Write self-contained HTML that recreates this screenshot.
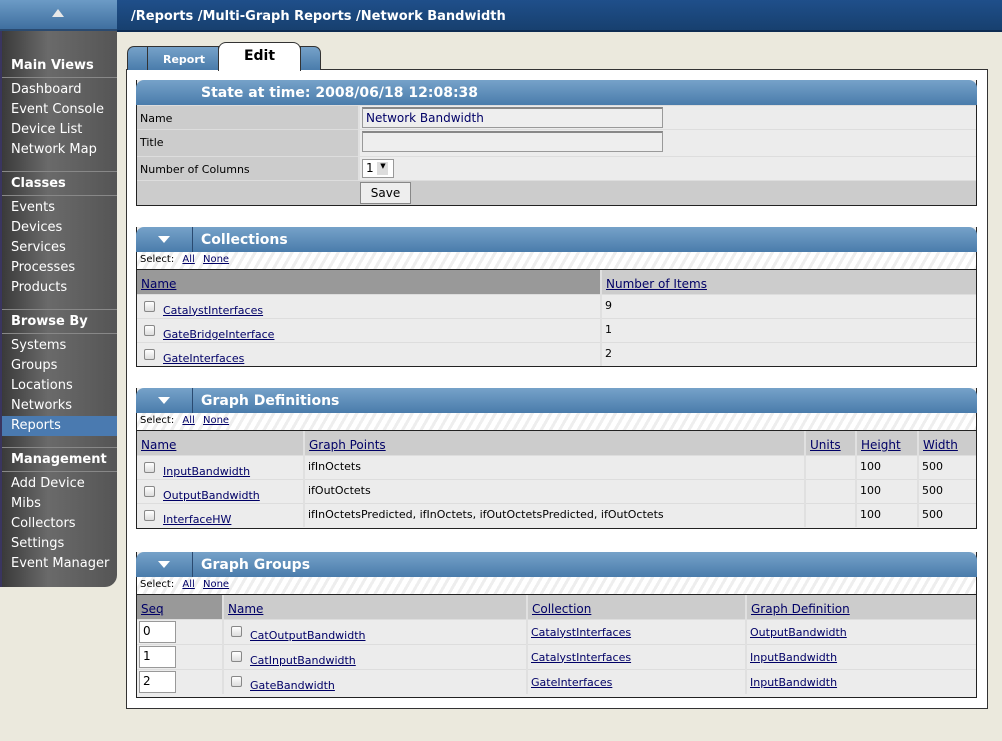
<!DOCTYPE html>
<html><head><meta charset="utf-8"><style>
*{box-sizing:border-box;margin:0;padding:0}
body{width:1002px;height:741px;background:#ebe9dd;font-family:"DejaVu Sans","Liberation Sans",sans-serif;font-size:11px;color:#000;position:relative;overflow:hidden}
.abs{position:absolute}
#top{left:117px;top:0;width:885px;height:32px;background:linear-gradient(#1f4f8a,#17406f);border-bottom:2px solid #0e2c52;color:#fff;font-weight:bold;font-size:13px;padding:9px 0 0 14px}
#tbtn{left:0;top:0;width:117px;height:31px;background:linear-gradient(#6c9bc6,#3f6f9f);border-bottom:2px solid #2a4a70}
#side{left:0;top:31px;width:117px;height:556px;background:linear-gradient(90deg,#3a3a3a,#6a6a6a 40%,#555 100%);border-left:2px solid #3a3560;border-bottom-right-radius:12px}
#side .h{color:#fff;font-weight:bold;font-size:13px;padding-left:9px;height:24px;line-height:24px;border-bottom:1px solid #888}
#side .i{color:#fff;font-size:13px;padding-left:9px;height:20px;line-height:20px}
#side .sep{border-top:1px solid #888;margin-top:11px}
#box{left:126px;top:69px;width:862px;height:640px;background:#fff;border:1px solid #333}
.sec{position:absolute;left:136px;width:841px;border:1px solid #222;border-top:none;background:#ececec}
.hd{height:25px;background:linear-gradient(#76a2c9,#4a7cab);border-radius:8px 8px 0 0;color:#fff;font-weight:bold;font-size:14px;position:relative;margin:0 -1px}
.hd .t{position:absolute;left:65px;top:5px}
.hd .tri{position:absolute;left:0;top:0;width:57px;height:25px;border-right:1px solid #2a4a70;border-radius:8px 0 0 0}
.hd .tri:after{content:"";position:absolute;left:22px;top:9px;border-left:6px solid transparent;border-right:6px solid transparent;border-top:7px solid #fff}
.sel{height:18px;background:repeating-linear-gradient(120deg,#fff 0 5px,#eee 5px 8px);border-bottom:1px solid #222;padding:2px 3px;font-size:10px}
a{color:#000066;text-decoration:underline}
.sel a{margin-left:5px}
table{border-collapse:collapse;width:100%}
th{background:#ccc;text-align:left;font-weight:normal;font-size:12px;height:24px;padding:4px 4px 0;border-left:2px solid #e0e0e0}
td{height:24px;border-top:1px solid #ddd;border-left:2px solid #e0e0e0;padding:0 3px;font-size:11px;vertical-align:top;padding-top:4px}
.cb{display:inline-block;width:11px;height:11px;border:1px solid #888;border-radius:2px;background:linear-gradient(#fff,#ddd);margin:2px 8px 0 4px;vertical-align:top}
td a{display:inline-block;margin-top:5px}
.f td{height:24px}
.inp{display:inline-block;background:#eee;border:1px solid #999;border-top:2px solid #888;height:21px;width:301px;padding:2px 3px;font-size:12px;color:#000066}
.seq{display:inline-block;width:37px;height:22px;border:1px solid #999;background:#fff;font-size:12px;padding:2px 3px}
.g td{height:25px}
</style></head><body>
<div class="abs" id="top">/Reports /Multi-Graph Reports /Network Bandwidth</div>
<div class="abs" id="tbtn"><div class="abs" style="left:52px;top:9px;border-left:6px solid transparent;border-right:6px solid transparent;border-bottom:8px solid #e8e8e8"></div></div>
<div class="abs" id="side">
<div style="height:23px"></div>
<div class="h">Main Views</div>
<div style="height:2px"></div>
<div class="i">Dashboard</div><div class="i">Event Console</div><div class="i">Device List</div><div class="i">Network Map</div>
<div class="sep"></div><div class="h">Classes</div><div style="height:2px"></div>
<div class="i">Events</div><div class="i">Devices</div><div class="i">Services</div><div class="i">Processes</div><div class="i">Products</div>
<div class="sep"></div><div class="h">Browse By</div><div style="height:2px"></div>
<div class="i">Systems</div><div class="i">Groups</div><div class="i">Locations</div><div class="i">Networks</div><div class="i" style="background:#4a7ab0">Reports</div>
<div class="sep"></div><div class="h">Management</div><div style="height:2px"></div>
<div class="i">Add Device</div><div class="i">Mibs</div><div class="i">Collectors</div><div class="i">Settings</div><div class="i">Event Manager</div>
</div>
<div class="abs" id="box"></div>
<div class="abs" style="left:127px;top:46px;width:92px;height:24px;background:linear-gradient(#76a2c9,#4a7cab);border:1px solid #333;border-bottom:none;border-radius:7px 0 0 0"></div>
<div class="abs" style="left:147px;top:46px;width:1px;height:24px;background:#333"></div>
<div class="abs" style="left:163px;top:53px;color:#fff;font-weight:bold;font-size:11px">Report</div>
<div class="abs" style="left:218px;top:42px;width:83px;height:29px;background:#fff;border:1px solid #333;border-bottom:none;border-radius:8px 8px 0 0;text-align:center;font-weight:bold;font-size:14px;padding-top:5px">Edit</div>
<div class="abs" style="left:300px;top:46px;width:21px;height:24px;background:linear-gradient(#76a2c9,#4a7cab);border:1px solid #333;border-bottom:none;border-radius:0 7px 0 0"></div>

<div class="sec" style="top:80px;height:126px">
<div class="hd"><span class="t">State at time: 2008/06/18 12:08:38</span></div>
<table class="f">
<tr><td style="width:222px;background:#ccc;border-left:none;padding-top:6px">Name</td><td style="padding:1px 2px"><span class="inp">Network Bandwidth</span></td></tr>
<tr><td style="background:#ccc;border-left:none;padding-top:6px">Title</td><td style="padding:1px 2px"><span class="inp"></span></td></tr>
<tr><td style="background:#ccc;border-left:none;padding-top:6px">Number of Columns</td><td style="padding:2px 2px"><span style="display:inline-block;width:32px;height:19px;border:1px solid #999;background:#fff;font-size:12px;padding:1px 3px">1 <span style="display:inline-block;width:11px;height:13px;background:#ddd;font-size:7px;text-align:center;vertical-align:top;margin-top:1px">▼</span></span></td></tr>
<tr><td style="background:#ccc;border-left:none"></td><td style="background:#ccc;padding:1px 1px;border-left:none"><span style="display:inline-block;width:51px;height:22px;border:1px solid #888;background:#eee;text-align:center;font-size:12px;padding-top:3px">Save</span></td></tr>
</table></div>

<div class="sec" style="top:227px;height:140px">
<div class="hd"><div class="tri"></div><span class="t">Collections</span></div>
<div class="sel">Select: <a>All</a> <a>None</a></div>
<table><tr><th style="width:464px;background:#999;border-left:none">  <a>Name</a></th><th><a>Number of Items</a></th></tr>
<tr><td style="border-left:none"><span class="cb"></span><a>CatalystInterfaces</a></td><td>9</td></tr>
<tr><td style="border-left:none"><span class="cb"></span><a>GateBridgeInterface</a></td><td>1</td></tr>
<tr><td style="border-left:none"><span class="cb"></span><a>GateInterfaces</a></td><td>2</td></tr></table></div>

<div class="sec" style="top:388px;height:141px">
<div class="hd"><div class="tri"></div><span class="t">Graph Definitions</span></div>
<div class="sel">Select: <a>All</a> <a>None</a></div>
<table><tr><th style="width:167px;border-left:none"><a>Name</a></th><th style="width:501px"><a>Graph Points</a></th><th style="width:51px"><a>Units</a></th><th style="width:62px"><a>Height</a></th><th><a>Width</a></th></tr>
<tr><td style="border-left:none"><span class="cb"></span><a>InputBandwidth</a></td><td>ifInOctets</td><td></td><td>100</td><td>500</td></tr>
<tr><td style="border-left:none"><span class="cb"></span><a>OutputBandwidth</a></td><td>ifOutOctets</td><td></td><td>100</td><td>500</td></tr>
<tr><td style="border-left:none"><span class="cb"></span><a>InterfaceHW</a></td><td>ifInOctetsPredicted, ifInOctets, ifOutOctetsPredicted, ifOutOctets</td><td></td><td>100</td><td>500</td></tr></table></div>

<div class="sec g" style="top:552px;height:146px">
<div class="hd"><div class="tri"></div><span class="t">Graph Groups</span></div>
<div class="sel">Select: <a>All</a> <a>None</a></div>
<table><tr><th style="width:86px;background:#999;border-left:none"><a>Seq</a></th><th style="width:304px"><a>Name</a></th><th style="width:219px"><a>Collection</a></th><th><a>Graph Definition</a></th></tr>
<tr><td style="border-left:none;padding:1px 2px"><span class="seq">0</span></td><td><span class="cb"></span><a>CatOutputBandwidth</a></td><td><a style="margin-top:2px">CatalystInterfaces</a></td><td><a style="margin-top:2px">OutputBandwidth</a></td></tr>
<tr><td style="border-left:none;padding:1px 2px"><span class="seq">1</span></td><td><span class="cb"></span><a>CatInputBandwidth</a></td><td><a style="margin-top:2px">CatalystInterfaces</a></td><td><a style="margin-top:2px">InputBandwidth</a></td></tr>
<tr><td style="border-left:none;padding:1px 2px"><span class="seq">2</span></td><td><span class="cb"></span><a>GateBandwidth</a></td><td><a style="margin-top:2px">GateInterfaces</a></td><td><a style="margin-top:2px">InputBandwidth</a></td></tr></table></div>
</body></html>
